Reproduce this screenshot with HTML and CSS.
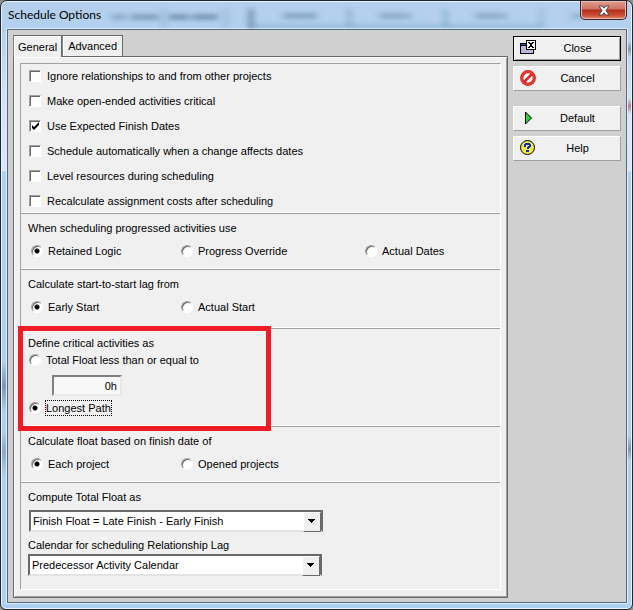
FILE: index.html
```html
<!DOCTYPE html>
<html lang="en">
<head>
<meta charset="utf-8">
<title>Schedule Options</title>
<link rel="stylesheet" href="styles.css">
</head>
<body>
<main class="window">
  <header class="titlebar">
    <svg class="glass" aria-hidden="true" width="100%" height="28">
      <defs><filter id="soft" x="-10%" y="-50%" width="120%" height="200%"><feGaussianBlur stdDeviation="3 2"/></filter></defs>
      <g filter="url(#soft)" fill="#24476b">
        <rect x="104" y="13" width="16" height="6" opacity=".25"/><rect x="124" y="13" width="28" height="6" opacity=".35"/>
        <rect x="162" y="13" width="20" height="6" opacity=".4"/><rect x="185" y="13" width="26" height="6" opacity=".4"/>
        <rect x="156" y="8" width="2" height="20" opacity=".3"/><rect x="218" y="8" width="2" height="20" opacity=".3"/>
        <rect x="242" y="8" width="4" height="20" opacity=".6"/>
        <rect x="276" y="12" width="34" height="6" opacity=".3"/><rect x="372" y="12" width="32" height="6" opacity=".25"/>
        <rect x="468" y="12" width="32" height="6" opacity=".25"/><rect x="564" y="12" width="12" height="6" opacity=".2"/>
        <rect x="341" y="8" width="3" height="18" opacity=".35"/><rect x="437" y="8" width="3" height="18" opacity=".3"/>
        <rect x="533" y="8" width="3" height="18" opacity=".2"/>
        <rect x="246" y="24" width="290" height="2" opacity=".3"/>
      </g>
    </svg>
    <h1>Schedule Options</h1>
    <button class="win-close" aria-label="Close window">
      <svg width="12" height="11" viewBox="0 0 12 11" aria-hidden="true"><path d="M1 1h3.300L6 3.200 7.700 1H11L8 5.500l3 4.500H7.700L6 7.800 4.300 10H1l3-4.500z" fill="#fff" stroke="#4c4450" stroke-width="1"/></svg>
    </button>
  </header>

  <div class="client">
    <div class="tabs">
      <div class="tablist" role="tablist">
        <button class="tab active" role="tab" aria-selected="true">General</button>
        <button class="tab" role="tab" aria-selected="false">Advanced</button>
      </div>
      <div class="panel" role="tabpanel">
        <form class="group">
          <section class="checks">
            <label><input type="checkbox">Ignore relationships to and from other projects</label>
            <label><input type="checkbox">Make open-ended activities critical</label>
            <label><input type="checkbox" checked>Use Expected Finish Dates</label>
            <label><input type="checkbox">Schedule automatically when a change affects dates</label>
            <label><input type="checkbox">Level resources during scheduling</label>
            <label><input type="checkbox">Recalculate assignment costs after scheduling</label>
          </section>
          <section>
            <h2>When scheduling progressed activities use</h2>
            <div class="options">
              <label><input type="radio" name="logic" checked>Retained Logic</label>
              <label><input type="radio" name="logic">Progress Override</label>
              <label><input type="radio" name="logic">Actual Dates</label>
            </div>
          </section>
          <section class="lag">
            <h2>Calculate start-to-start lag from</h2>
            <div class="options">
              <label><input type="radio" name="lag" checked>Early Start</label>
              <label><input type="radio" name="lag">Actual Start</label>
            </div>
          </section>
          <section class="critical">
            <h2>Define critical activities as</h2>
            <label><input type="radio" name="critical">Total Float less than or equal to</label>
            <input class="hours" type="text" value="0h" aria-label="Total Float limit">
            <label><input type="radio" name="critical" checked><span class="focused">Longest Path</span></label>
            <div class="highlight"></div>
          </section>
          <section>
            <h2>Calculate float based on finish date of</h2>
            <div class="options">
              <label><input type="radio" name="float" checked>Each project</label>
              <label><input type="radio" name="float">Opened projects</label>
            </div>
          </section>
          <section class="lists">
            <label for="compute">Compute Total Float as</label>
            <div class="combo"><select id="compute"><option>Finish Float = Late Finish - Early Finish</option></select></div>
            <label for="calendar">Calendar for scheduling Relationship Lag</label>
            <div class="combo"><select id="calendar"><option>Predecessor Activity Calendar</option></select></div>
          </section>
        </form>
      </div>
    </div>

    <nav class="actions">
      <button class="action default">
        <svg width="16" height="16" viewBox="0 0 16 16" shape-rendering="crispEdges" aria-hidden="true"><path fill="#000" d="M0 3h14v11H0z"/><path fill="#b8b8d8" d="M1 6h12v7H1z"/><path fill="#1f4fe0" d="M1 4h6v1H1z"/><path fill="#000" d="M6 0h10v10H6z"/><path fill="#fff" d="M7 1h8v8H7z"/><path fill="#000" d="M8 2h2v1H8zM12 2h2v1h-2zM9 3h4v1H9zM10 4h2v2h-2zM9 6h4v1H9zM8 7h2v1H8zM12 7h2v1h-2z"/></svg>
        <span>Close</span>
      </button>
      <button class="action">
        <svg width="16" height="16" viewBox="0 0 16 16" aria-hidden="true"><circle cx="8" cy="8" r="6.300" fill="#fff" stroke="#c81e1e" stroke-width="3.200"/><circle cx="8" cy="8" r="6.300" fill="none" stroke="#f04438" stroke-width="1.400"/><path d="M4 12 12 4" stroke="#dc2828" stroke-width="2.600"/></svg>
        <span>Cancel</span>
      </button>
      <button class="action spaced">
        <svg width="16" height="16" viewBox="0 0 16 16" aria-hidden="true"><path d="M5.500 2v12l6-6z" fill="#2fd03a" stroke="#000"/></svg>
        <span>Default</span>
      </button>
      <button class="action">
        <svg width="16" height="16" viewBox="0 0 16 16" aria-hidden="true"><circle cx="7.500" cy="7.500" r="7" fill="#f0e848" stroke="#000"/><path shape-rendering="crispEdges" d="M5 3h5v1h1v3h-1v1H8.500v1h-2V7H8V6h1V5H6v2H4V4h1zM6 10h3v2H6z" fill="#1030c8"/></svg>
        <span>Help</span>
      </button>
    </nav>
  </div>
</main>
</body>
</html>
```
FILE: styles.css
```css
* { box-sizing: border-box; }

body {
  margin: 0;
  background: #8e8e8e;
  color: #000;
  font: 11px/14px "Liberation Sans", Arial, sans-serif;
}

h1, h2 { margin: 0; font-weight: normal; }
button, input, select { font: inherit; color: inherit; }

.window {
  display: flex;
  flex-direction: column;
  min-height: 100vh;
  padding: 0 5px 6px 6px;
  border: 1px solid #20242c;
  border-radius: 7px 7px 6px 6px;
  background:
    linear-gradient(transparent 360px, #7896b8 385px, transparent 410px, transparent 430px, #8aa8c8 450px, transparent 475px) left / 6px 100% no-repeat,
    linear-gradient(transparent 40px, #8294a8 48px, transparent 56px, transparent 97px, #c07888 105px, transparent 113px, transparent 435px, #7896b8 448px, transparent 460px) right / 6px 100% no-repeat,
    linear-gradient(#b4cfeb, #b2d0ee 28px, #d4e4f4 100px, #d8e8f8 170px, #aed0f2 171px);
  box-shadow: inset 0 0 0 1px #e8f3fd;
}

.titlebar {
  position: relative;
  display: flex;
  justify-content: space-between;
  height: 28px;
}
.glass { position: absolute; inset: 0; }

.titlebar h1 {
  position: relative;
  padding: 5px 1px;
  font: 12px/18px Lato, "Noto Sans", sans-serif;
}

.win-close {
  position: relative;
  display: grid;
  place-items: center;
  width: 47px;
  height: 19px;
  padding: 0;
  border: 1px solid #43202a;
  border-top: 0;
  border-radius: 0 0 5px 5px;
  background: linear-gradient(#e0a090, #cf7060 45%, #b52b16 50%, #c9503a 80%, #e08a68);
  box-shadow: inset 0 0 0 1px #eab8ac;
}

.client {
  flex: 1;
  display: flex;
  gap: 5px;
  padding: 5px 5px 4px;
  border: 1px solid #55687a;
  background: #d0d0d0;
  box-shadow: 0 0 0 1px #dceefc;
}

.tabs { flex: 1; display: flex; flex-direction: column; }
.tablist { display: flex; align-items: flex-end; }

.tab {
  position: relative;
  height: 21px;
  padding: 0 5px;
  border: 1px solid #696969;
  border-bottom: 0;
  border-left-color: #808080;
  background: #f0f0f0;
  box-shadow: inset 1px 1px #fff;
}
.tab.active { z-index: 1; height: 22px; margin-bottom: -1px; padding: 0 4px; }

.panel {
  flex: 1;
  display: flex;
  padding: 6px 6px 7px;
  border: 1px solid #696969;
  background: #f0f0f0;
  box-shadow: inset 1px 1px #fff, inset -1px -1px #a0a0a0;
}

.group {
  flex: 1;
  border: 1px solid #a0a0a0;
  border-right-color: #fff;
  border-bottom-color: #fff;
}

section {
  position: relative;
  padding: 7px 7px 11px;
  border-bottom: 1px solid #a0a0a0;
  box-shadow: inset 0 -1px #fff;
}
section:last-child { border: 0; box-shadow: none; }

h2 { font-size: 11px; line-height: 14px; }
label { display: flex; align-items: center; gap: 6px; line-height: 14px; }

.checks { display: grid; gap: 11px; padding: 5px 8px; }

.options {
  display: grid;
  grid-template-columns: 150px 184px auto;
  padding: 9px 0 0 3px;
}
.options label, .critical label { gap: 5px; }
.lag { padding-bottom: 14px; }

input[type="checkbox"], input[type="radio"] {
  appearance: none;
  flex: none;
  width: 12px;
  height: 12px;
  margin: 0;
  border: 1px solid #a0a0a0;
  border-right-color: #fff;
  border-bottom-color: #fff;
  background: #fff center / 8px 8px no-repeat;
  box-shadow: inset 1px 1px #696969;
}
input[type="radio"] { border-radius: 50%; }
input[type="checkbox"]:checked {
  background-image: url("data:image/svg+xml,%3Csvg xmlns='http://www.w3.org/2000/svg' viewBox='0 0 8 8'%3E%3Cpath d='M1 3v3l2 2 5-5V0L3 5z'/%3E%3C/svg%3E");
}
input[type="radio"]:checked { background-image: radial-gradient(circle, #000 2px, transparent 3px); }

.critical { padding: 7px 8px 11px; }
.critical h2 { margin: 0 0 3px -1px; }
.critical .hours {
  display: block;
  width: 70px;
  height: 21px;
  margin: 8px 0 5px 23px;
  padding: 0 3px;
  border: 2px solid;
  border-color: #808080 #e8e8e8 #e8e8e8 #808080;
  background: #f8f8f8;
  text-align: right;
}
.focused { outline: 1px dotted #000; }
.highlight {
  position: absolute;
  top: -3px;
  left: -3px;
  width: 253px;
  height: 105px;
  border: 5px solid #ee1c25;
  pointer-events: none;
}

.lists { padding-bottom: 12px; }
.combo {
  position: relative;
  width: 294px;
  margin: 6px 0 6px 1px;
}
.combo:last-child { margin: 2px 0 0; }
.combo select {
  appearance: none;
  display: block;
  width: 100%;
  height: 22px;
  padding: 0 22px 0 2px;
  border: 2px solid;
  border-color: #696969 #696969 #e3e3e3 #696969;
  border-radius: 0;
  background: #fff;
}
.combo::after {
  content: "";
  position: absolute;
  top: 2px;
  right: 2px;
  width: 16px;
  height: 18px;
  border: 1px solid;
  border-color: #fff #696969 #696969 #fff;
  background: conic-gradient(from -45deg at 50% 80%, #000 90deg, transparent 0) 4px 6px / 7px 5px no-repeat, #f0f0f0;
  pointer-events: none;
}

.actions { width: 108px; padding-top: 1px; }
.action {
  display: flex;
  align-items: center;
  width: 100%;
  height: 25px;
  margin-bottom: 5px;
  padding: 0 6px 2px;
  border: 1px solid;
  border-color: #fff #a0a0a0 #a0a0a0 #fff;
  background: #f0f0f0;
}
.action span { flex: 1; padding-left: 5px; text-align: center; }
.action.default { border-color: #000; box-shadow: inset 1px 1px #fff, inset -1px -1px #a0a0a0; }
.action.spaced { margin-top: 15px; }
```
